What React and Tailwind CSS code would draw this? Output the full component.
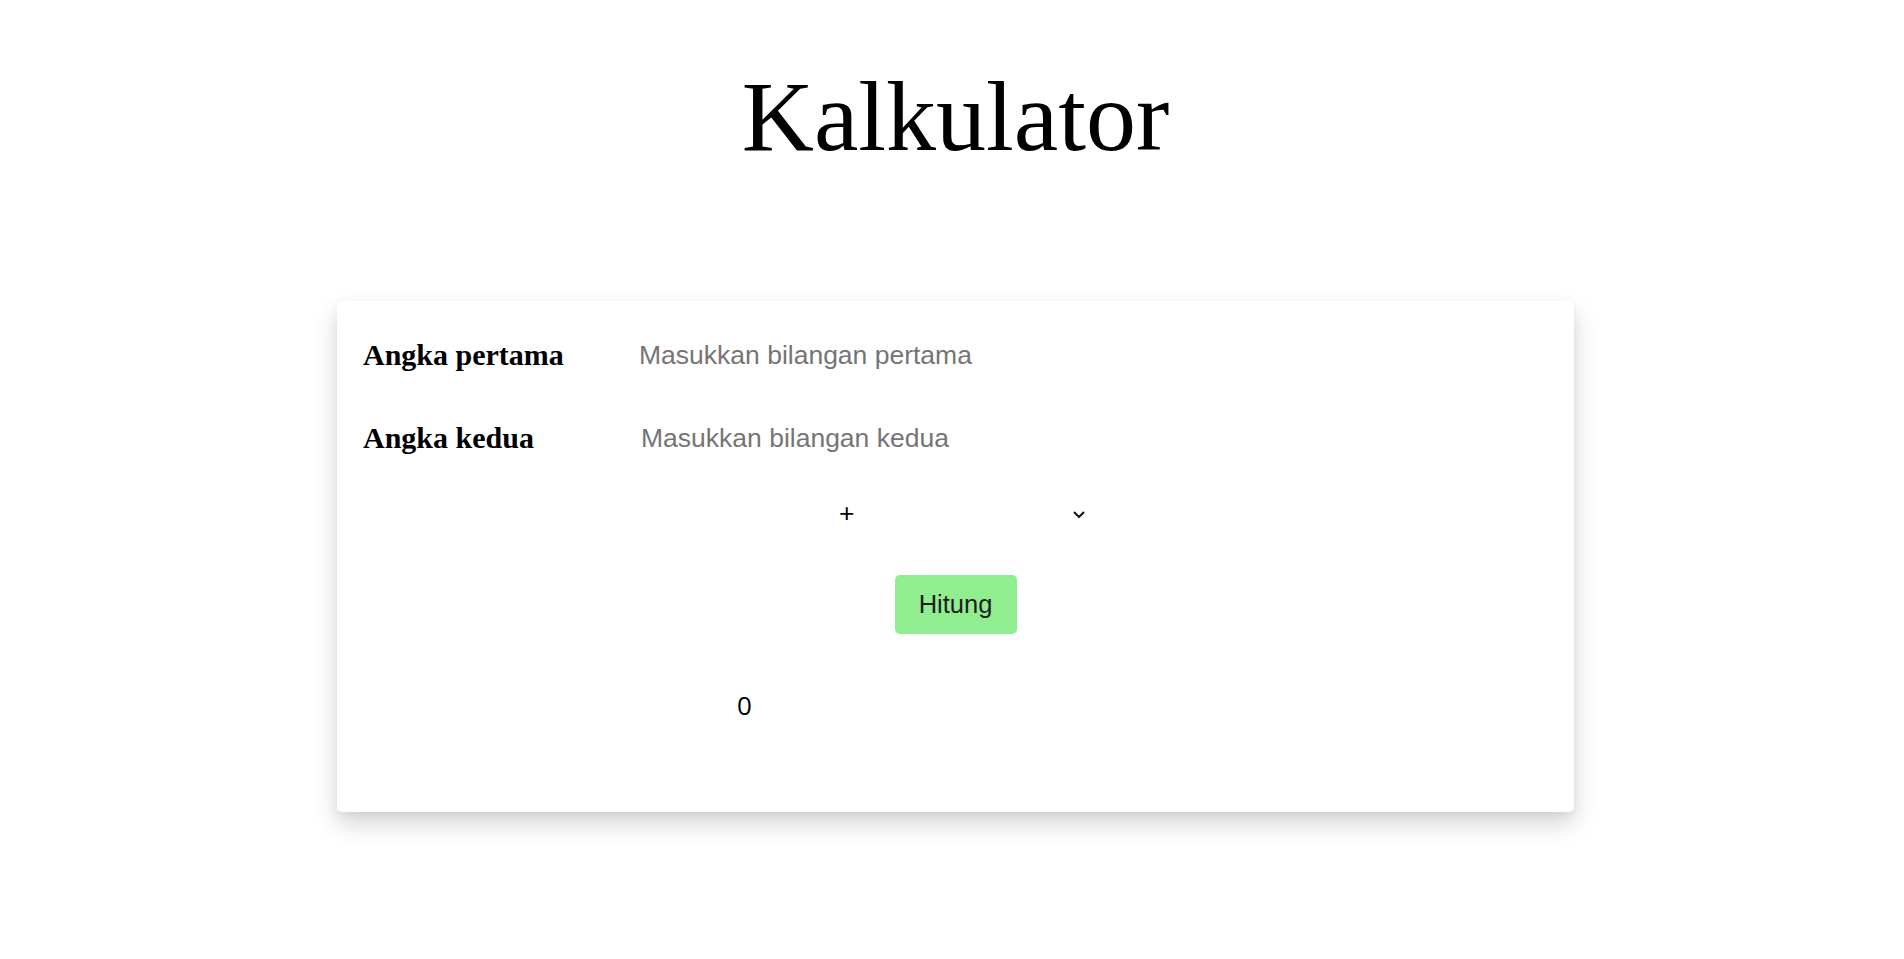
import React from "react";

export default function App() {
  return (
    <div className="ml-[7px] min-h-screen bg-white pb-[100px]">
      <h1 className="pt-[67px] text-center font-['Liberation_Serif','Times_New_Roman',serif] text-[100px] leading-[100px] font-normal text-black">
        Kalkulator
      </h1>

      <div className="mx-auto mt-[134px] w-[1237px] rounded-[5px] bg-white px-[26px] pt-[29px] pb-[92px] shadow-[0_12px_24px_rgba(0,0,0,0.17),0_3px_8px_rgba(0,0,0,0.05)]">
        <div className="flex h-[50px] items-center">
          <label className="w-[276px] font-['Liberation_Serif','Times_New_Roman',serif] text-[30px] leading-[30px] font-bold text-black">
            Angka pertama
          </label>
          <input
            type="text"
            placeholder="Masukkan bilangan pertama"
            className="w-[500px] bg-transparent font-['Liberation_Sans',Arial,sans-serif] text-[26.5px] leading-[30px] text-black outline-none placeholder:text-[#757575]"
          />
        </div>

        <div className="mt-[33px] flex h-[50px] items-center">
          <label className="w-[278px] font-['Liberation_Serif','Times_New_Roman',serif] text-[30px] leading-[30px] font-bold text-black">
            Angka kedua
          </label>
          <input
            type="text"
            placeholder="Masukkan bilangan kedua"
            className="w-[500px] bg-transparent font-['Liberation_Sans',Arial,sans-serif] text-[26.5px] leading-[30px] text-black outline-none placeholder:text-[#757575]"
          />
        </div>

        <div className="mt-[30px] flex h-[41px] items-center">
          <div className="ml-[476px] flex w-[247px] items-center justify-between font-['Liberation_Sans',Arial,sans-serif] text-[26.5px] leading-[30px] text-black">
            <span className="-mt-[1px]">+</span>
            <svg width="12" height="7" viewBox="0 0 12 7" className="mt-[2px] mr-[1px]">
              <path d="M1 1 L6 6 L11 1" fill="none" stroke="#111" strokeWidth="2" />
            </svg>
          </div>
        </div>

        <div className="mt-[41px] flex justify-center">
          <button className="h-[59px] w-[122px] rounded-[5px] bg-[#90EE90] font-['Liberation_Sans',Arial,sans-serif] text-[25.5px] leading-[57px] text-[#1e1e1e]">
            Hitung
          </button>
        </div>

        <div className="mt-[56px] pl-[374px] font-['Open_Sans','Liberation_Sans',sans-serif] text-[26px] leading-[30px] text-black">
          0
        </div>
      </div>
    </div>
  );
}
